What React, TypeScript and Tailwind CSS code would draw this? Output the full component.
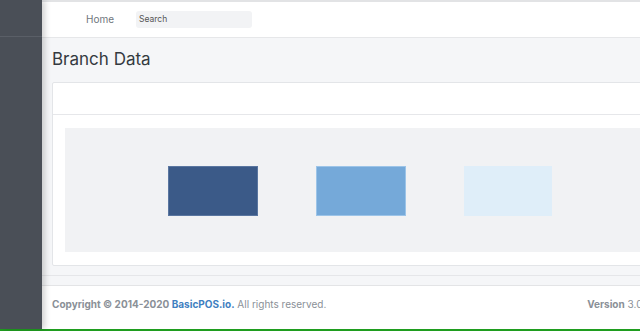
export default function App() {
  return (
    <div className="flex h-[331px] w-[640px] flex-col overflow-hidden bg-white font-['Inter','Liberation_Sans',sans-serif]">
      <div className="flex min-h-0 flex-1">
        {/* sidebar */}
        <aside className="relative z-10 w-[42px] shrink-0 bg-[#4a4f57] shadow-[3px_0_6px_rgba(0,0,0,0.18)]">
          <div className="h-[37px] border-b border-[#5a5f67]" />
        </aside>

        <div className="flex w-[640px] shrink-0 flex-col bg-[#f5f6f8]">
          {/* navbar */}
          <nav className="flex h-[38px] shrink-0 items-center border-t-2 border-b border-t-[#e2e3e5] border-b-[#e6e7e9] bg-white">
            <span className="ml-[44px] text-[10px] text-[#6f767d]">Home</span>
            <div className="ml-[22px] flex h-[17px] w-[116px] items-center rounded-[3px] bg-[#f2f3f5] pl-[3px] text-[8.5px] text-[#555]">
              Search
            </div>
          </nav>

          {/* content header */}
          <div className="flex h-[44px] shrink-0 items-center pl-[10px]">
            <h1 className="text-[17px] font-normal text-[#343a40]">Branch Data</h1>
          </div>

          {/* card */}
          <div className="ml-[10px] flex h-[184px] shrink-0 flex-col rounded-[2px] border border-[#e3e5e8] bg-white">
            <div className="h-[32px] shrink-0 border-b border-[#e6e7ea]" />
            <div className="flex-1 px-[12px] pt-[13px]">
              <div className="flex h-[124px] items-center gap-[58px] bg-[#f1f2f4] pl-[103px] pt-[2px]">
                <div className="h-[50px] w-[90px] border border-[#5a76a0] bg-[#3b5a88]" />
                <div className="h-[50px] w-[90px] border border-[#9cc4e8] bg-[#75a9d9]" />
                <div className="h-[50px] w-[88px] bg-[#dfeef9]" />
              </div>
            </div>
          </div>

          <div className="mt-[9px] h-px shrink-0 bg-[#e5e6e9]" />
          <div className="h-[9px] shrink-0" />

          {/* footer */}
          <footer className="flex flex-1 items-start justify-between whitespace-nowrap border-t border-[#e3e4e6] bg-white pl-[10px] pr-[31px] pt-[11px] text-[10px] text-[#8a9097]">
            <p>
              <span className="font-bold">Copyright © 2014-2020 </span>
              <span className="font-bold text-[#3f7fc1]">BasicPOS.io.</span>
              <span> All rights reserved.</span>
            </p>
            <p>
              <span className="font-bold">Version</span> 3.0.5
            </p>
          </footer>
        </div>
      </div>
      <div className="h-[2px] shrink-0 bg-[#1f9d1f]" />
    </div>
  )
}
